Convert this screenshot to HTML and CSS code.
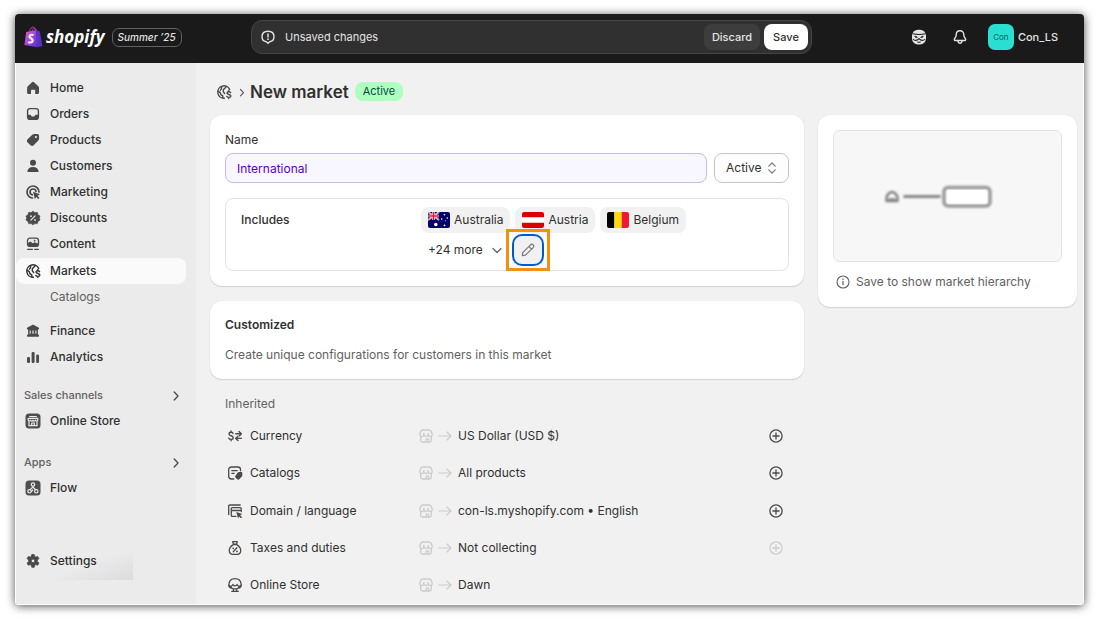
FILE: index.html
```
<!DOCTYPE html>
<html lang="en">
<head>
  <meta charset="UTF-8" />
  <meta name="viewport" content="width=device-width, initial-scale=1.0" />
  <title>New market</title>
  <link rel="stylesheet" href="styles.css">
</head>
<body>

  <!-- shared icons -->
  <svg class="sprite" aria-hidden="true">
    <symbol id="i-globe" viewBox="0 0 16 16">
      <g fill="none" stroke="currentColor" stroke-width="1.400" stroke-linecap="round" stroke-linejoin="round">
        <path d="M8.400 14.200A6.200 6.200 0 1 1 13.700 5.600"/>
        <path d="M2 7.200l2.300 1.500.6 2 1.900 1.200v2M5.800 2.500 5.400 4.800l-1 1.400M10.400 2.600 8.800 4.300 7.300 5.800v2l1.400 1.800"/>
        <path d="M14.600 8.700c-.4-.6-1-.9-1.800-.9-1.100 0-1.800.5-1.800 1.300 0 1.800 3.900.9 3.900 2.900 0 .9-.8 1.400-2 1.400-.9 0-1.700-.3-2.100-1M12.800 6.500v1.200M12.800 13.500v1"/>
      </g>
    </symbol>
    <symbol id="i-store" viewBox="0 0 16 16">
      <g fill="none" stroke="currentColor" stroke-width="1.3" stroke-linejoin="round" stroke-linecap="round">
        <path d="M4.600 2h6.800c1.100 0 2 1.400 2.700 3.600.5 1.800-.6 2.900-1.800 2.900-1 0-1.800-.5-2.100-1.400C9.800 8 9 8.500 8 8.500S6.200 8 5.800 7.100C5.500 8 4.700 8.500 3.700 8.500 2.500 8.500 1.400 7.400 1.900 5.600 2.600 3.400 3.500 2 4.600 2z"/>
        <path d="M2.700 8.600v3.900c0 .9.7 1.500 1.500 1.500h7.600c.8 0 1.500-.6 1.500-1.500V8.600M8.200 13.800v-2.600h2.400v2.600M5.800 7V5.500M10.200 7V5.500"/>
      </g>
    </symbol>
    <symbol id="i-arrow" viewBox="0 0 16 16">
      <path d="M2 8h12M10 4l4 4-4 4" fill="none" stroke="currentColor" stroke-width="1.200" stroke-linecap="round" stroke-linejoin="round"/>
    </symbol>
    <symbol id="i-plus" viewBox="0 0 16 16">
      <path d="M8 4.900v6.200M4.900 8h6.200" fill="none" stroke="currentColor" stroke-width="1.300" stroke-linecap="round"/>
      <circle cx="8" cy="8" r="6.100" fill="none" stroke="currentColor" stroke-width="1.300"/>
    </symbol>
    <symbol id="i-chevron" viewBox="0 0 16 16">
      <path d="M6.200 5l3.800 4-3.800 4" fill="none" stroke="currentColor" stroke-width="1.300" stroke-linecap="round" stroke-linejoin="round"/>
    </symbol>
  </svg>

  <div class="window">
    <header class="topbar">
      <a href="#" class="brand">
        <svg class="bag" viewBox="0 0 19 22" aria-hidden="true">
          <defs>
            <linearGradient id="bagFill" x1="0" y1="0" x2="1" y2="1">
              <stop offset="0" stop-color="#e064c8"/>
              <stop offset="0.500" stop-color="#a443dc"/>
              <stop offset="1" stop-color="#5a2bd0"/>
            </linearGradient>
          </defs>
          <path d="M5.500 5.500C6 2.500 7.800.9 9.300 1.100s1.900 1.900 1.900 3.700M8 5c.4-2 1.800-3.200 2.900-2.800.9.3 1.300 1.300 1.400 2.500" fill="none" stroke="#b43fae" stroke-width="1"/>
          <path d="M2.200 6 12.500 4l.7 17.200L.4 19z" fill="url(#bagFill)"/>
          <path d="M12.500 4l3.300 1.400L18.400 20l-5.200 1.200z" fill="#5b2fc9"/>
          <path d="M9.600 9.200C8.700 8.500 5.600 8.300 5.500 10.500c-.1 2 3.400 2 3.200 4.300-.2 2.200-3.300 2.100-4.400.9" fill="none" stroke="#fff" stroke-width="2.100"/>
        </svg>
        <span class="wordmark">shopify</span>
        <span class="edition">Summer ’25</span>
      </a>

      <div class="savebar">
        <svg class="icon" viewBox="0 0 16 16" aria-hidden="true">
          <path d="M8 14.300 6.300 12.700C3.500 12.500 2 11 2 7.600 2 4 3.500 2.200 8 2.200s6 1.800 6 5.400c0 3.400-1.500 4.900-4.300 5.100z" fill="none" stroke="currentColor" stroke-width="1.400" stroke-linejoin="round"/>
          <path d="M8 5v3" stroke="currentColor" stroke-width="1.500" stroke-linecap="round"/>
          <circle cx="8" cy="10.200" r=".9" fill="currentColor"/>
        </svg>
        <span class="savebar-text">Unsaved changes</span>
        <button type="button" class="btn-discard">Discard</button>
        <button type="button" class="btn-save">Save</button>
      </div>

      <div class="account">
        <button type="button" class="icon-btn" aria-label="Sidekick">
          <svg class="icon" viewBox="0 0 16 16" aria-hidden="true">
            <rect x="1" y=".7" width="14" height="14.800" rx="6" fill="#e3e3e3"/>
            <path d="M1.500 4.700c4.300 1 8.700 1 13 0M1.900 10.400c2.300 1.600 4.500 1 6.100-.8 1.600 1.800 3.800 2.400 6.100.8" fill="none" stroke="#1a1a1a" stroke-width="1.100"/>
            <path d="M3.600 7.400c1.100-.3 2 0 2.900.9-1 .6-2.200.3-2.900-.9zM12.400 7.400c-1.100-.3-2 0-2.900.9 1 .6 2.200.3 2.900-.9z" fill="#1a1a1a" stroke="#1a1a1a" stroke-width=".5"/>
            <path d="M6.300 13c1.100.4 2.300.4 3.400 0" stroke="#1a1a1a" fill="none"/>
          </svg>
        </button>
        <button type="button" class="icon-btn" aria-label="Notifications">
          <svg class="icon" viewBox="0 0 16 16" aria-hidden="true">
            <path d="M8 1.700c-2.400 0-3.800 1.800-3.800 4.100 0 2.100-.5 2.800-1.500 3.800-.7.700-.5 1.900.6 1.900h9.400c1.100 0 1.300-1.200.6-1.900-1-1-1.500-1.700-1.500-3.800 0-2.300-1.400-4.100-3.800-4.100zM6 11.700c.1 1.600.9 2.500 2 2.500s1.900-.9 2-2.500" fill="none" stroke="currentColor" stroke-width="1.400" stroke-linejoin="round"/>
          </svg>
        </button>
        <a href="#" class="user"><span class="avatar">Con</span>Con_LS</a>
      </div>
    </header>

    <div class="layout">
      <nav class="sidebar" aria-label="Main">
        <a href="#">
          <svg class="icon" viewBox="0 0 16 16" aria-hidden="true"><path d="M7 2.200a1.500 1.500 0 0 1 2 0l4.300 4c.5.500.7 1 .7 1.600v4.700c0 .9-.6 1.500-1.500 1.500h-2.300V10.700c0-.6-.4-1-1-1H7c-.6 0-1 .4-1 1V14H3.600c-.9 0-1.500-.6-1.500-1.500V7.800c0-.6.2-1.100.7-1.600z" fill="currentColor"/></svg>
          Home
        </a>
        <a href="#">
          <svg class="icon" viewBox="0 0 16 16" aria-hidden="true"><path fill-rule="evenodd" d="M5 1.900h6A3.100 3.100 0 0 1 14.100 5v6a3.100 3.100 0 0 1-3.100 3.100H5A3.100 3.100 0 0 1 1.900 11V5A3.100 3.100 0 0 1 5 1.900zM5 3.300c-1 0-1.700.7-1.700 1.700v3.700H5c.6 0 .9.400 1.100.9.200.600.500.900 1 .9h1.800c.5 0 .8-.3 1-.9.200-.5.500-.9 1.100-.9h1.700V5c0-1-.7-1.700-1.700-1.700z" fill="currentColor"/></svg>
          Orders
        </a>
        <a href="#">
          <svg class="icon" viewBox="0 0 16 16" aria-hidden="true"><path fill-rule="evenodd" d="M9.300 1.900h3c1 0 1.800.8 1.800 1.800v2.900c0 .8-.3 1.500-.8 2l-4.600 4.700c-.9.900-2.300.9-3.200 0L2.600 10.400c-.9-.9-.9-2.300 0-3.200l4.700-4.500c.5-.5 1.200-.8 2-.8zm1.600 4.200a1.100 1.100 0 1 0 0-2.200 1.100 1.100 0 0 0 0 2.200z" fill="currentColor"/></svg>
          Products
        </a>
        <a href="#">
          <svg class="icon" viewBox="0 0 16 16" aria-hidden="true"><circle cx="8" cy="4.700" r="3" fill="currentColor"/><path d="M2.400 13.200C3 10.500 5 9.100 8 9.100s5 1.400 5.600 4.100c.1.500-.2.900-.7.900H3.100c-.5 0-.8-.4-.7-.9z" fill="currentColor"/></svg>
          Customers
        </a>
        <a href="#">
          <svg class="icon" viewBox="0 0 16 16" aria-hidden="true"><path d="M7.500 14A6 6 0 1 1 14 8M7.300 10.900A3 3 0 1 1 11 7.500" fill="none" stroke="currentColor" stroke-width="1.700" stroke-linecap="round"/><path d="M8 7.700l7 2.600-2.500 1.500 2 2.100-1.200 1.200-2.100-2-1.300 2.200z" fill="currentColor"/></svg>
          Marketing
        </a>
        <a href="#">
          <svg class="icon" viewBox="0 0 16 16" aria-hidden="true"><path d="M8 1l1.900 1.600 2.500-.3.600 2.400 2.100 1.400L14.300 8l.8 2.100-2.100 1.300-.7 2.400-2.500-.2L8 15l-1.900-1.400-2.500.2-.6-2.400L.9 10.100 1.700 8 .9 6.100 3 4.700l.6-2.400 2.500.3z" fill="currentColor" stroke="currentColor" stroke-width=".5" stroke-linejoin="round"/><path d="M5.900 10.100l4.200-4.200" stroke="#ebebeb" stroke-width="1.200" stroke-linecap="round"/><circle cx="6" cy="6.200" r=".9" fill="#ebebeb"/><circle cx="10" cy="9.900" r=".9" fill="#ebebeb"/></svg>
          Discounts
        </a>
        <a href="#">
          <svg class="icon" viewBox="0 0 16 16" aria-hidden="true"><rect x="2.500" y="2.200" width="11" height="8.200" rx="2.400" fill="none" stroke="currentColor" stroke-width="1.300"/><path d="M2.600 7.200l2.700-1.800 2.500 1.900 1.900-1.100 3.700 1.500v1.400c0 .8-.6 1.300-1.300 1.300H4c-.8 0-1.400-.5-1.400-1.300z" fill="currentColor"/><circle cx="9.600" cy="4.700" r=".9" fill="currentColor"/><path d="M2.700 13.400h4.600M9.800 13.400h3.500" stroke="currentColor" stroke-width="1.400" stroke-linecap="round"/></svg>
          Content
        </a>
        <a href="#" class="active" aria-current="page">
          <svg class="icon" aria-hidden="true"><use href="#i-globe"/></svg>
          Markets
        </a>
        <a href="#" class="sub">Catalogs</a>
        <a href="#" class="spaced">
          <svg class="icon" viewBox="0 0 16 16" aria-hidden="true"><path fill-rule="evenodd" d="M7.200 1.900c.5-.3 1.100-.3 1.600 0l4.700 2.500c1.100.6.700 2-.4 2h-.2v4.800c.7.200 1.100.7 1.100 1.500 0 .7-.3 1.100-1 1.100H3c-.7 0-1-.4-1-1.100 0-.8.4-1.300 1.100-1.500V6.400h-.2c-1.100 0-1.500-1.400-.4-2zM4.600 7.500v3.200h1.100V7.500zm2.800 0v3.200h1.200V7.500zm2.900 0v3.200h1.100V7.500z" fill="currentColor"/></svg>
          Finance
        </a>
        <a href="#">
          <svg class="icon" viewBox="0 0 16 16" aria-hidden="true"><rect x="2" y="8" width="3" height="6" rx="1.200" fill="currentColor"/><rect x="6.600" y="3" width="3" height="11" rx="1.200" fill="currentColor"/><rect x="11.200" y="5.500" width="2.800" height="8.500" rx="1.200" fill="currentColor"/></svg>
          Analytics
        </a>

        <a href="#" class="section">Sales channels <svg class="icon" aria-hidden="true"><use href="#i-chevron"/></svg></a>
        <a href="#">
          <svg class="icon" viewBox="0 0 16 16" aria-hidden="true"><rect x=".5" y=".5" width="15" height="15" rx="3.500" fill="#4f4f4f"/><path d="M4.200 3.500h7.600M3.200 5.400h9.600v1.400c0 1.500-2.100 1.600-2.400.3-.4 1.400-2.100 1.400-2.400 0-.3 1.400-2 1.400-2.400 0-.3 1.300-2.400 1.200-2.400-.3zM4 8.300v4.400h8V8.300M6.700 12.600V10h2.600v2.600" fill="none" stroke="#ebebeb" stroke-width="1.200" stroke-linejoin="round"/></svg>
          Online Store
        </a>
        <a href="#" class="section apps">Apps <svg class="icon" aria-hidden="true"><use href="#i-chevron"/></svg></a>
        <a href="#">
          <svg class="icon" viewBox="0 0 16 16" aria-hidden="true"><rect x=".5" y=".5" width="15" height="15" rx="3.500" fill="#4f4f4f"/><g fill="none" stroke="#ebebeb" stroke-width="1.200"><circle cx="8" cy="4.500" r="1.700"/><circle cx="4.500" cy="11.300" r="1.700"/><circle cx="11.300" cy="11.300" r="1.700"/><path d="M8 6.200c0 2-2 1.500-2.600 3.500M8 6.200c0 2.500 2 2 2.400 3.700M6.200 11.300c.9-.2 1.300-.8 1.800-1.700"/></g></svg>
          Flow
        </a>
        <a href="#" class="settings">
          <svg class="icon" viewBox="0 0 16 16" aria-hidden="true"><path fill-rule="evenodd" d="M6.800 1.500h2.400l.5 2 1 .6 2-.6 1.200 2.100-1.500 1.500v1.500l1.500 1.500-1.200 2.100-2-.6-1 .6-.5 2.100H6.800l-.5-2.100-1-.6-2 .6-1.200-2.100 1.500-1.500V7.100L2.100 5.600l1.200-2.100 2 .6 1-.6zM8 9.700A1.800 1.800 0 1 0 8 6.100a1.800 1.800 0 0 0 0 3.600z" fill="currentColor" stroke="currentColor" stroke-width=".8" stroke-linejoin="round"/></svg>
          Settings
        </a>
      </nav>

      <main class="content">
        <div class="page-title">
          <svg class="icon" aria-hidden="true"><use href="#i-globe"/></svg>
          <svg class="crumb" viewBox="0 0 8 12" aria-hidden="true"><path d="M2.500 3.500l3 3.200-3 3.200" fill="none" stroke="currentColor" stroke-width="1.200" stroke-linecap="round"/></svg>
          <h1>New market</h1>
          <span class="badge">Active</span>
        </div>

        <div class="columns">
          <div class="primary">
            <section class="card">
              <label for="marketName">Name</label>
              <div class="name-row">
                <input type="text" id="marketName" value="International">
                <div class="select">
                  <select aria-label="Status">
                    <option>Active</option>
                    <option>Draft</option>
                  </select>
                  <svg class="icon" viewBox="0 0 16 16" aria-hidden="true"><path d="M4.800 6.100 8 2.900l3.200 3.200M4.800 9.900 8 13.100l3.200-3.200" fill="none" stroke="currentColor" stroke-width="1.300" stroke-linecap="round" stroke-linejoin="round"/></svg>
                </div>
              </div>

              <div class="includes">
                <h2>Includes</h2>
                <div class="regions">
                  <div class="chips">
                    <span class="chip">
                      <svg class="flag" viewBox="0 0 22 16" aria-hidden="true"><path fill="#00006b" d="M0 0h22v16H0z"/><path d="M0 0l11 8M11 0 0 8" stroke="#fff" stroke-width="1.700"/><path d="M0 0l11 8M11 0 0 8" stroke="#d8102e" stroke-width=".6"/><path d="M5.500 0v8M0 4h11" stroke="#fff" stroke-width="2.600"/><path d="M5.500 0v8M0 4h11" stroke="#e0162f" stroke-width="1.500"/><g fill="#fff"><circle cx="7.800" cy="12.500" r="1.700"/><circle cx="16.500" cy="2.800" r=".8"/><circle cx="13.700" cy="7" r=".8"/><circle cx="19.300" cy="6" r=".8"/><circle cx="17.700" cy="8.800" r=".5"/><circle cx="16.500" cy="13.300" r=".9"/></g></svg>
                      Australia
                    </span>
                    <span class="chip">
                      <svg class="flag" viewBox="0 0 22 16" aria-hidden="true"><path fill="#fff" d="M0 0h22v16H0z"/><path fill="#d80000" d="M0 0h22v5.300H0zM0 10.700h22V16H0z"/></svg>
                      Austria
                    </span>
                    <span class="chip">
                      <svg class="flag" viewBox="0 0 22 16" aria-hidden="true"><path d="M0 0h7.400v16H0z"/><path fill="#ffd90c" d="M7.400 0h7.300v16H7.400z"/><path fill="#f31830" d="M14.700 0H22v16h-7.300z"/></svg>
                      Belgium
                    </span>
                  </div>
                  <div class="more-row">
                    <button type="button" class="more">+24 more
                      <svg class="icon" viewBox="0 0 16 16" aria-hidden="true"><path d="M4 6.500l4 4 4-4" fill="none" stroke="currentColor" stroke-width="1.200" stroke-linecap="round" stroke-linejoin="round"/></svg>
                    </button>
                    <button type="button" class="edit" aria-label="Edit regions">
                      <svg class="icon" viewBox="0 0 16 16" aria-hidden="true"><path d="M2.300 13.700l.5-3 7.400-7.600c1-1 2.200-1 3-.2s.7 2-.2 2.900l-7.600 7.300zM9 4.500l2.600 2.600" fill="none" stroke="currentColor" stroke-width="1.200" stroke-linejoin="round"/></svg>
                    </button>
                  </div>
                </div>
              </div>
            </section>

            <section class="card customized">
              <h2>Customized</h2>
              <p>Create unique configurations for customers in this market</p>
            </section>

            <section class="inherited">
              <h3>Inherited</h3>
              <ul>
                <li>
                  <svg class="icon" viewBox="0 0 16 16" aria-hidden="true"><path d="M6 5.300C5.600 4.600 5 4.300 4 4.300c-1.200 0-1.900.6-1.900 1.600C2.100 8.500 6.200 7 6.200 9.800c0 1.100-.9 1.700-2.100 1.700-1.100 0-1.900-.4-2.300-1.300M4 3v1.200M4 11.600v1.200M8.800 5.800h5.400M12 3.600l2.300 2.200-1.700 2M14.400 10.400H9M11 8.200l-2.300 2.200L11 12.600" fill="none" stroke="currentColor" stroke-width="1.400" stroke-linecap="round" stroke-linejoin="round"/></svg>
                  <span class="label">Currency</span>
                  <svg class="icon pale" aria-hidden="true"><use href="#i-store"/></svg>
                  <svg class="icon pale arrow" aria-hidden="true"><use href="#i-arrow"/></svg>
                  <span class="value">US Dollar (USD $)</span>
                  <button type="button" class="add" aria-label="Customize currency"><svg class="icon" aria-hidden="true"><use href="#i-plus"/></svg></button>
                </li>
                <li>
                  <svg class="icon" viewBox="0 0 16 16" aria-hidden="true"><path d="M6.800 14H4.500C2.900 14 1.700 12.800 1.700 11.200V4.800C1.700 3.200 2.900 2 4.500 2h6.300c1.500 0 2.700 1 2.700 2.600v1.200M4.800 5.600h5.400M4.800 8.300h2.400" fill="none" stroke="currentColor" stroke-width="1.300" stroke-linecap="round"/><path d="M11.800 7.100h2.500c.6 0 1 .4 1 1v2.300c0 .5-.2.900-.5 1.200l-2.500 2.700c-.7.600-1.600.6-2.200 0l-1.500-1.500c-.6-.6-.6-1.500 0-2.200l2-2.900c.3-.4.700-.6 1.200-.6z" fill="currentColor"/></svg>
                  <span class="label">Catalogs</span>
                  <svg class="icon pale" aria-hidden="true"><use href="#i-store"/></svg>
                  <svg class="icon pale arrow" aria-hidden="true"><use href="#i-arrow"/></svg>
                  <span class="value">All products</span>
                  <button type="button" class="add" aria-label="Customize catalogs"><svg class="icon" aria-hidden="true"><use href="#i-plus"/></svg></button>
                </li>
                <li>
                  <svg class="icon" viewBox="0 0 16 16" aria-hidden="true"><path d="M1.700 11.500V3.100c0-.7.500-1.100 1.100-1.100h10.400M9 13.300H5.200c-.5 0-.9-.4-.9-.9V5.500c0-.5.4-.9.900-.9h8.100c.5 0 .9.400.9.900v3M4.300 7.500h10" fill="none" stroke="currentColor" stroke-width="1.300" stroke-linecap="round"/><path d="M9.300 8.900l6 2.200-2.200 1.200 2 2-1.100 1-1.900-1.900-1 2z" fill="currentColor"/></svg>
                  <span class="label">Domain / language</span>
                  <svg class="icon pale" aria-hidden="true"><use href="#i-store"/></svg>
                  <svg class="icon pale arrow" aria-hidden="true"><use href="#i-arrow"/></svg>
                  <span class="value">con-ls.myshopify.com • English</span>
                  <button type="button" class="add" aria-label="Customize domain and language"><svg class="icon" aria-hidden="true"><use href="#i-plus"/></svg></button>
                </li>
                <li>
                  <svg class="icon" viewBox="0 0 16 16" aria-hidden="true"><path d="M5.700 1.700h4.600l-.8 2.500h-3zM6.300 4.600C3.500 6.200 2.300 8.200 2.300 10.600c0 2.400 1.500 3.800 3.500 3.800h4.400c2 0 3.500-1.400 3.500-3.800 0-2.400-1.200-4.400-4-6zM6.300 11.700l3.600-3.900" fill="none" stroke="currentColor" stroke-width="1.300" stroke-linejoin="round" stroke-linecap="round"/><circle cx="6.200" cy="8.300" r=".9" fill="currentColor"/><circle cx="10" cy="11.400" r=".9" fill="currentColor"/></svg>
                  <span class="label">Taxes and duties</span>
                  <svg class="icon pale" aria-hidden="true"><use href="#i-store"/></svg>
                  <svg class="icon pale arrow" aria-hidden="true"><use href="#i-arrow"/></svg>
                  <span class="value">Not collecting</span>
                  <button type="button" class="add" aria-label="Customize taxes and duties" disabled><svg class="icon" aria-hidden="true"><use href="#i-plus"/></svg></button>
                </li>
                <li>
                  <svg class="icon" viewBox="0 0 16 16" aria-hidden="true"><path d="M3.600 11C2 10.300 1.600 8.500 1.900 7.200 2.200 3.600 4.100 1.700 8 1.700s5.800 1.900 6.100 5.500c.3 1.300-.1 3.100-1.700 3.800M2 8c1 1.900 3.200 1.500 3.900-.6.800 1.900 3.400 1.900 4.200 0C10.800 9.500 13 9.900 14 8M4.200 9.900c.2 1.200.9 1.900 2 2h3.600c1.100-.1 1.800-.8 2-2M6.400 12v2M9.600 12v2M4.700 14.300h6.600" fill="none" stroke="currentColor" stroke-width="1.300" stroke-linecap="round" stroke-linejoin="round"/></svg>
                  <span class="label">Online Store</span>
                  <svg class="icon pale" aria-hidden="true"><use href="#i-store"/></svg>
                  <svg class="icon pale arrow" aria-hidden="true"><use href="#i-arrow"/></svg>
                  <span class="value">Dawn</span>
                </li>
              </ul>
            </section>
          </div>

          <aside class="card hierarchy">
            <div class="preview">
              <svg viewBox="0 0 140 40" aria-hidden="true">
                <g class="haze">
                  <path d="M8.500 25v-2.500c0-3.500 3-6.500 5.500-6.500s5.500 3 5.500 6.500V25zM10.500 23.500h7" fill="none" stroke="#858585" stroke-width="2.500" stroke-linejoin="round"/>
                  <path d="M25.500 20.500h37" stroke="#858585" stroke-width="2.800"/>
                  <rect x="66" y="11.500" width="46" height="18.500" rx="4" fill="#fff" stroke="#999" stroke-width="3.500"/>
                </g>
                <rect x="69" y="14" width="40" height="13.500" rx="2" fill="#fff"/>
              </svg>
            </div>
            <p>
              <svg class="icon" viewBox="0 0 16 16" aria-hidden="true"><circle cx="8" cy="8" r="6" fill="none" stroke="currentColor" stroke-width="1.100"/><path d="M8 7.400v3.400" stroke="currentColor" stroke-width="1.200" stroke-linecap="round"/><circle cx="8" cy="5.300" r=".8" fill="currentColor"/></svg>
              Save to show market hierarchy
            </p>
          </aside>
        </div>
      </main>
    </div>
  </div>

</body>
</html>
```
FILE: styles.css
```
* {
  box-sizing: border-box;
}
body {
  margin: 0;
  padding: 14px 16px 15px 15px;
  min-height: 100vh;
  display: flex;
  background: #fff;
  color: #303030;
  font-family: Inter, "Liberation Sans", sans-serif;
  font-size: 12px;
  line-height: 20px;
}
a {
  color: inherit;
  text-decoration: none;
}
button, input, select {
  font: inherit;
  color: inherit;
}
button {
  border: none;
  padding: 0;
  background: none;
  cursor: pointer;
}
h1, h2, h3, p, ul {
  margin: 0;
  padding: 0;
}
.sprite {
  position: absolute;
  width: 0;
  height: 0;
}
.icon {
  display: block;
  flex: none;
  width: 16px;
  height: 16px;
}

/* App window */
.window {
  flex: 1;
  display: flex;
  flex-direction: column;
  border-radius: 4px;
  overflow: hidden;
  background: #f1f1f1;
  box-shadow: 0 1px 10px rgba(0, 0, 0, 0.7);
}

/* Top bar */
.topbar {
  display: grid;
  grid-template-columns: 236px minmax(0, 1fr) 272px;
  align-items: center;
  height: 49px;
  padding-bottom: 3px;
  background: #1a1a1a;
  color: #e3e3e3;
  font-size: 11px;
}
.brand {
  display: flex;
  align-items: center;
  padding-left: 9px;
}
.bag {
  width: 19px;
  height: 22px;
}
.wordmark {
  margin: 0 7px 0 3px;
  color: #fff;
  font-family: "Open Sans", sans-serif;
  font-size: 17px;
  font-style: italic;
  font-weight: 700;
}
.edition {
  padding: 0 5px;
  border: 1px solid #616161;
  border-radius: 7px;
  font-size: 10px;
  font-style: italic;
  font-weight: 500;
  line-height: 17px;
}
.savebar {
  display: flex;
  align-items: center;
  height: 34px;
  padding: 0 3px 0 8px;
  border: 1px solid #444;
  border-radius: 11px;
  background: #303030;
}
.savebar-text {
  flex: 1;
  padding-left: 9px;
}
.btn-discard, .btn-save {
  height: 26px;
  border-radius: 8px;
  font-weight: 500;
}
.btn-discard {
  width: 56px;
  margin-right: 4px;
  background: #3d3d3d;
}
.btn-save {
  width: 44px;
  background: #fff;
  color: #303030;
}
.account {
  display: flex;
  align-items: center;
  justify-content: flex-end;
  gap: 25px;
  padding-right: 26px;
}
.user {
  display: flex;
  align-items: center;
  gap: 4px;
  margin-left: -5px;
  font-weight: 500;
}
.avatar {
  width: 26px;
  border-radius: 7px;
  background: #2adfd2;
  color: #0c5f58;
  font-size: 8px;
  font-weight: 400;
  line-height: 26px;
  text-align: center;
}

.layout {
  flex: 1;
  display: flex;
  border: 1px solid #fff;
  border-top: none;
}

/* Sidebar */
.sidebar {
  flex: none;
  display: flex;
  flex-direction: column;
  width: 180px;
  padding: 12px 10px 0 0;
  background: #ebebeb;
  font-weight: 500;
}
.sidebar a {
  display: flex;
  align-items: center;
  gap: 9px;
  height: 26px;
  padding-left: 9px;
  border-radius: 8px;
}
.sidebar .icon {
  color: #4a4a4a;
}
.sidebar .active {
  margin-top: 1px;
  background: #fafafa;
}
.sidebar .active .icon {
  color: #303030;
}
.sidebar .sub {
  padding-left: 34px;
  color: #616161;
  font-weight: 400;
}
.sidebar .spaced {
  margin-top: 8px;
}
.sidebar .section {
  justify-content: space-between;
  margin-top: 12px;
  padding: 0 2px 0 8px;
  color: #616161;
  font-size: 11px;
}
.sidebar .apps {
  margin-top: 15px;
}
.sidebar .settings {
  width: 117px;
  height: 38px;
  margin-top: 41px;
  border-radius: 0;
  background: linear-gradient(160deg, transparent 60%, #dcdcdc);
}

/* Page */
.content {
  flex: 1;
  display: flex;
  flex-direction: column;
  min-width: 0;
  padding: 0 6px 0 14px;
}
.page-title {
  display: flex;
  align-items: center;
  height: 52px;
  padding: 5px 0 0 6px;
}
.page-title .icon {
  color: #4a4a4a;
}
.crumb {
  width: 8px;
  height: 12px;
  margin: 0 4px 0 6px;
  color: #616161;
}
h1 {
  font-size: 17px;
  font-weight: 600;
}
.badge {
  margin-left: 6px;
  padding: 0 8px;
  border-radius: 8px;
  background: #affebf;
  color: #014b40;
  font-size: 11px;
  line-height: 19px;
}
.columns {
  flex: 1;
  display: grid;
  grid-template-columns: minmax(0, 1fr) 259px;
  align-items: start;
  gap: 14px;
}
.primary {
  align-self: stretch;
  display: flex;
  flex-direction: column;
}
.card {
  padding: 15px;
  border-radius: 12px;
  background: #fff;
  box-shadow: 0 1px 1px rgba(0, 0, 0, 0.12), 0 0 1px rgba(0, 0, 0, 0.15);
}
.card label {
  display: block;
  margin-bottom: 3px;
}
.name-row {
  display: flex;
  gap: 7px;
}
.name-row input {
  flex: 1;
  min-width: 0;
  height: 30px;
  padding: 0 11px;
  border: 1px solid #c9b8ea;
  border-radius: 8px;
  background: #f8f7ff;
  color: #5700d1;
}
.select {
  position: relative;
}
.select select {
  width: 75px;
  height: 30px;
  padding: 0 11px;
  border: 1px solid #c4c4c4;
  border-radius: 8px;
  background: #fdfdfd;
  appearance: none;
}
.select .icon {
  position: absolute;
  top: 7px;
  right: 9px;
  color: #7a7a7a;
  pointer-events: none;
}
.includes {
  display: flex;
  margin-top: 15px;
  padding: 8px 15px 0;
  border: 1px solid #e3e3e3;
  border-radius: 8px;
}
.includes h2 {
  width: 180px;
  line-height: 26px;
  font-size: 12px;
  font-weight: 500;
}
.chips {
  display: flex;
  gap: 5px;
}
.chip {
  display: flex;
  align-items: center;
  gap: 4px;
  height: 26px;
  padding: 0 7px;
  border-radius: 8px;
  background: #f1f1f1;
}
.flag {
  width: 22px;
  height: 16px;
  border-radius: 2px;
}
.more-row {
  display: flex;
  align-items: center;
  gap: 7px;
  padding: 1px 0 4px 7px;
}
.more {
  display: flex;
  align-items: center;
  gap: 6px;
}
.more .icon {
  color: #616161;
}
.edit {
  position: relative;
  display: flex;
  align-items: center;
  justify-content: center;
  width: 32px;
  height: 32px;
  border: 2px solid #005bd3;
  border-radius: 10px;
  background: #f1f1f1;
  color: #7a7a7a;
}
/* orange frame round the edit button */
.edit::after {
  content: "";
  position: absolute;
  inset: -7px -8px;
  border: 3px solid #f29111;
}
.customized {
  margin-top: 15px;
  padding: 14px 15px;
}
.customized h2 {
  margin-bottom: 10px;
  font-size: 12px;
  font-weight: 600;
}
.customized p, .inherited h3, .hierarchy p {
  color: #616161;
}
.inherited {
  flex: 1;
  display: flex;
  flex-direction: column;
}
.inherited h3 {
  padding: 15px 15px 3px;
  font-size: 12px;
  font-weight: 400;
}
.inherited ul {
  flex: 1;
  display: flex;
  flex-direction: column;
  list-style: none;
}
.inherited li {
  flex: 1;
  display: flex;
  align-items: center;
  min-height: 32px;
  padding: 0 20px 0 17px;
}
.inherited li > .icon:first-child {
  color: #4a4a4a;
}
.inherited .label {
  width: 168px;
  margin-left: 7px;
}
.inherited .value {
  flex: 1;
}
.inherited .pale {
  color: #ccc;
}
.inherited .arrow {
  margin: 0 5px 0 3px;
}
.add {
  color: #4a4a4a;
}
.add:disabled {
  color: #ccc;
}
.preview {
  display: flex;
  align-items: center;
  justify-content: center;
  height: 132px;
  border: 1px solid #e3e3e3;
  border-radius: 7px;
  background: #f7f7f7;
}
.preview svg {
  width: 140px;
  height: 40px;
}
.haze {
  filter: blur(1px);
}
.hierarchy p {
  display: flex;
  align-items: center;
  gap: 5px;
  padding: 10px 0 0 2px;
}
```
